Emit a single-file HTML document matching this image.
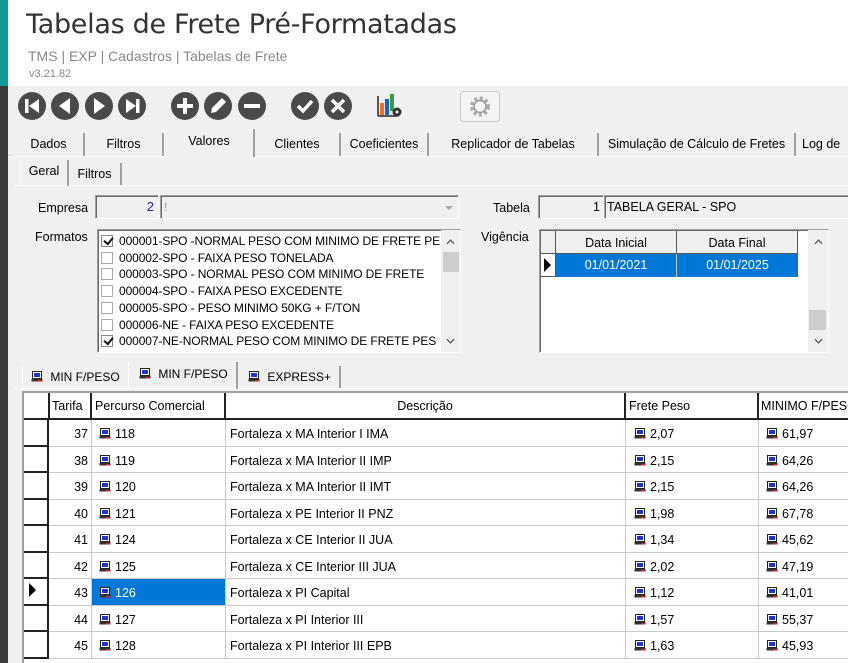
<!DOCTYPE html>
<html><head><meta charset="utf-8">
<style>
*{box-sizing:border-box;margin:0;padding:0}
body{width:863px;height:663px;overflow:hidden;background:#fff;font-family:"Liberation Sans",sans-serif;font-size:12px;color:#000;position:relative}
.a{position:absolute}
.tab{position:absolute;top:133px;height:23px;background:#f0f0f0;border-right:2px solid #a0a0a0;text-align:center;line-height:22px;font-size:12.5px}
.sunk{border:1px solid #a0a0a0;border-right-color:#fff;border-bottom-color:#fff;box-shadow:inset 1px 1px 0 #696969}
.row{position:absolute;left:0;width:824px;border-bottom:1px solid #c8c8c8;background:#fff}
.c{position:absolute;top:0;height:100%;border-right:1px solid #c8c8c8;line-height:28px;font-size:12.5px;white-space:nowrap;overflow:hidden}
.ind{left:0;width:25px;background:#fff;border-right:2px solid #222;border-bottom:2px solid #222;height:calc(100% + 1px)}
.ic{display:inline-block;vertical-align:-1px;margin-right:4px}
.cb{display:inline-block;width:12px;height:12px;border:1px solid #aaa;vertical-align:-2px;margin-right:6px;position:relative}
.cb.k{border-color:#888}
.cb.k::after{content:"";position:absolute;left:2px;top:1px;width:7px;height:4px;border-left:2px solid #111;border-bottom:2px solid #111;transform:rotate(-50deg)}
</style></head><body>
<svg width="0" height="0" style="position:absolute"><defs>
<symbol id="mon" viewBox="0 0 12 11"><rect x="1.5" y="0.5" width="9" height="7" fill="#fff" stroke="#222"/><rect x="3" y="2" width="6" height="4" fill="#2030e0"/><rect x="0.5" y="8" width="11" height="2.5" fill="#333"/><rect x="7" y="9" width="4" height="1.5" fill="#e02020"/></symbol>
<symbol id="up" viewBox="0 0 10 6"><path d="M1 5 L5 1 L9 5" stroke="#555" stroke-width="1.5" fill="none"/></symbol>
<symbol id="dn" viewBox="0 0 10 6"><path d="M1 1 L5 5 L9 1" stroke="#555" stroke-width="1.5" fill="none"/></symbol>
</defs></svg>

<div class="a" style="left:0;top:0;width:8px;height:86px;background:#129a94"></div>
<div class="a" style="left:0;top:86px;width:8px;height:577px;background:#3c3c3c"></div>
<div class="a" style="left:8px;top:86px;width:840px;height:577px;background:#f0f0f0"></div>

<div class="a" style="left:26px;top:9px;font-size:27px;color:#333;font-family:'DejaVu Sans','Liberation Sans',sans-serif;letter-spacing:-0.3px">Tabelas de Frete Pré-Formatadas</div>
<div class="a" style="left:28px;top:48px;font-size:14px;color:#888">TMS | EXP | Cadastros | Tabelas de Frete</div>
<div class="a" style="left:29px;top:68px;font-size:11px;color:#888">v3.21.82</div>

<svg class="a" style="left:0;top:88px" width="520" height="38">
<g fill="#4a4a4a">
<circle cx="32" cy="18" r="14"/><circle cx="65" cy="18" r="14"/><circle cx="99" cy="18" r="14"/><circle cx="132" cy="18" r="14"/>
<circle cx="185" cy="18" r="14"/><circle cx="218" cy="18" r="14"/><circle cx="252" cy="18" r="14"/>
<circle cx="305" cy="18" r="14"/><circle cx="338" cy="18" r="14"/></g>
<g fill="#fff">
<rect x="25" y="11" width="3.5" height="14"/><path d="M39 11 L29 18 L39 25Z"/>
<path d="M70 10 L59 18 L70 26Z"/>
<path d="M94 10 L105 18 L94 26Z"/>
<path d="M126 11 L136 18 L126 25Z"/><rect x="136" y="11" width="3.5" height="14"/>
<rect x="183" y="10" width="4" height="16"/><rect x="177" y="16" width="16" height="4"/>
<path d="M211 25 L212 20 L222 10 L226 14 L216 24Z"/>
<rect x="244" y="16" width="16" height="4"/>
</g>
<path d="M298 18 L303 23 L312 13" stroke="#fff" stroke-width="3.5" fill="none"/>
<path d="M332 12 L344 24 M344 12 L332 24" stroke="#fff" stroke-width="3.5"/>
<line x1="378" y1="8" x2="378" y2="28" stroke="#222" stroke-width="1.5"/><line x1="378" y1="28" x2="398" y2="28" stroke="#222" stroke-width="1.5"/>
<rect x="380" y="15" width="4" height="12" fill="#f07020"/><rect x="385" y="11" width="4" height="16" fill="#2060d0"/><rect x="390" y="6" width="4" height="17" fill="#30a040"/>
<circle cx="397" cy="24" r="4.5" fill="#333"/><circle cx="397" cy="24" r="1.5" fill="#f0f0f0"/>
<rect x="460.5" y="3.5" width="39" height="30" rx="3" fill="#f4f4f4" stroke="#c8c8c8"/>
<circle cx="480" cy="18.5" r="8" fill="none" stroke="#aaa" stroke-width="4" stroke-dasharray="3 2.3"/><circle cx="480" cy="18.5" r="6" fill="none" stroke="#999" stroke-width="1.5"/>
</svg>

<div class="a" style="left:8px;top:155px;width:840px;height:2px;background:#fff;border-top:1px solid #d8d8d8"></div>
<div class="tab" style="left:14px;width:71px">Dados</div>
<div class="tab" style="left:85px;width:79px">Filtros</div>
<div class="tab" style="left:164px;width:91px;top:129px;height:28px;border-left:1px solid #fff;line-height:24px">Valores</div>
<div class="tab" style="left:255px;width:86px">Clientes</div>
<div class="tab" style="left:341px;width:88px">Coeficientes</div>
<div class="tab" style="left:429px;width:170px">Replicador de Tabelas</div>
<div class="tab" style="left:599px;width:197px">Simulação de Cálculo de Fretes</div>
<div class="tab" style="left:796px;width:60px;border:none;text-align:left;padding-left:6px">Log de</div>

<div class="a" style="left:14px;top:185px;width:834px;height:2px;border-top:1px solid #fff"></div>
<div class="a" style="left:20px;top:160px;width:49px;height:26px;border-left:1px solid #fff;border-right:2px solid #a0a0a0;text-align:center;line-height:22px;font-size:12.5px">Geral</div>
<div class="a" style="left:69px;top:163px;width:53px;height:22px;border-right:2px solid #a0a0a0;text-align:center;line-height:22px;font-size:12.5px">Filtros</div>

<div class="a" style="left:38px;top:201px;font-size:12.5px">Empresa</div>
<div class="a sunk" style="left:95px;top:195px;width:64px;height:24px;text-align:right;padding-right:4px;line-height:22px;color:#2020a0;font-size:13px">2</div>
<div class="a sunk" style="left:160px;top:195px;width:299px;height:24px;background:#f0f0f0"><span style="position:absolute;left:3px;top:4px;color:#999">!</span>
<svg class="a" style="right:4px;top:9px" width="10" height="6"><path d="M1 1 L5 5 L9 1Z" fill="#aaa"/></svg></div>
<div class="a" style="left:493px;top:201px;font-size:12.5px">Tabela</div>
<div class="a sunk" style="left:538px;top:195px;width:66px;height:24px;text-align:right;padding-right:3px;line-height:22px;font-size:12.5px">1</div>
<div class="a sunk" style="left:604px;top:195px;width:250px;height:24px;padding-left:2px;line-height:22px;font-size:12.5px">TABELA GERAL - SPO</div>

<div class="a" style="left:35px;top:230px;font-size:12.5px">Formatos</div>
<div class="a sunk" style="left:97px;top:229px;width:364px;height:124px;background:#fff;overflow:hidden">
<div style="position:absolute;left:3px;top:3px;font-size:12px;line-height:16.7px;white-space:nowrap;letter-spacing:-0.1px">
<div><span class="cb k"></span>000001-SPO -NORMAL PESO COM MINIMO DE FRETE PE</div>
<div><span class="cb"></span>000002-SPO - FAIXA PESO TONELADA</div>
<div><span class="cb"></span>000003-SPO - NORMAL PESO COM MINIMO DE FRETE</div>
<div><span class="cb"></span>000004-SPO - FAIXA PESO EXCEDENTE</div>
<div><span class="cb"></span>000005-SPO -  PESO MINIMO 50KG + F/TON</div>
<div><span class="cb"></span>000006-NE - FAIXA PESO EXCEDENTE</div>
<div><span class="cb k"></span>000007-NE-NORMAL PESO COM MINIMO DE FRETE PES</div>
</div>
<div style="position:absolute;right:0;top:0;width:19px;height:122px;background:#f0f0f0">
<svg style="position:absolute;left:5px;top:9px" width="9" height="6"><use href="#up"/></svg>
<div style="position:absolute;left:2px;top:22px;width:16px;height:20px;background:#cdcdcd"></div>
<svg style="position:absolute;left:5px;top:108px" width="9" height="6"><use href="#dn"/></svg></div>
</div>

<div class="a" style="left:481px;top:230px;font-size:12.5px">Vigência</div>
<div class="a sunk" style="left:539px;top:229px;width:290px;height:124px;background:#fff">
<div style="position:absolute;left:1px;top:1px;width:15px;height:23px;background:#f0f0f0;border-right:1px solid #555;border-bottom:1px solid #555"></div>
<div style="position:absolute;left:16px;top:1px;width:121px;height:23px;background:#f0f0f0;border-right:1px solid #555;border-bottom:1px solid #555;text-align:center;line-height:24px;font-size:12.5px">Data Inicial</div>
<div style="position:absolute;left:137px;top:1px;width:121px;height:23px;background:#f0f0f0;border-right:1px solid #555;border-bottom:1px solid #555;text-align:center;line-height:24px;font-size:12.5px">Data Final</div>
<div style="position:absolute;left:1px;top:24px;width:15px;height:23px;background:#fff;border-right:1px solid #555;border-bottom:1px solid #555"><svg width="10" height="14" style="position:absolute;left:3px;top:4px"><path d="M0 0 L7 7 L0 14Z" fill="#000"/></svg></div>
<div style="position:absolute;left:16px;top:24px;width:121px;height:23px;background:#0078d7;color:#fff;border-right:1px solid #c8c8c8;text-align:center;line-height:23px;font-size:12.5px">01/01/2021</div>
<div style="position:absolute;left:137px;top:24px;width:121px;height:23px;background:#0078d7;color:#fff;text-align:center;line-height:23px;font-size:12.5px">01/01/2025</div>
<div style="position:absolute;right:0;top:0;width:20px;height:122px;background:#f0f0f0">
<svg style="position:absolute;left:6px;top:9px" width="9" height="6"><use href="#up"/></svg>
<div style="position:absolute;left:1px;top:80px;width:17px;height:20px;background:#cdcdcd"></div>
<svg style="position:absolute;left:6px;top:108px" width="9" height="6"><use href="#dn"/></svg></div>
</div>

<div class="a" style="left:14px;top:388px;width:834px;height:2px;border-top:1px solid #fff"></div>
<div class="a" style="left:22px;top:366px;width:106px;height:22px;border-left:1px solid #fff;line-height:22px;font-size:12px;padding-left:8px"><svg class="ic" width="12" height="11"><use href="#mon"/></svg> MIN F/PESO</div>
<div class="a" style="left:128px;top:362px;width:110px;height:27px;border-left:1px solid #fff;border-right:2px solid #a0a0a0;line-height:24px;font-size:12px;padding-left:10px"><svg class="ic" width="12" height="11"><use href="#mon"/></svg> MIN F/PESO</div>
<div class="a" style="left:238px;top:366px;width:103px;height:22px;border-right:2px solid #a0a0a0;line-height:22px;font-size:12px;padding-left:10px"><svg class="ic" width="12" height="11"><use href="#mon"/></svg> EXPRESS+</div>

<div class="a" style="left:22px;top:391px;width:826px;height:272px;border-left:2px solid #a0a0a0;border-top:2px solid #a0a0a0;background:#fff;overflow:hidden">
<div style="position:absolute;left:0;top:0;width:824px;height:27px;background:#fff;border-bottom:2px solid #222">
<div class="c" style="left:0;width:26px;border-right:2px solid #222"></div>
<div class="c" style="left:26px;width:42px;border-right:2px solid #222;padding-left:2px;line-height:26px">Tarifa</div>
<div class="c" style="left:68px;width:134px;border-right:2px solid #222;padding-left:3px;line-height:26px">Percurso Comercial</div>
<div class="c" style="left:202px;width:400px;border-right:2px solid #222;text-align:center;line-height:26px">Descrição</div>
<div class="c" style="left:602px;width:133px;border-right:2px solid #222;padding-left:3px;line-height:26px">Frete Peso</div>
<div class="c" style="left:735px;width:100px;padding-left:2px;line-height:26px">MINIMO F/PESO</div>
</div>
</div>
<div class="a" style="left:24px;top:420px;width:824px;height:243px;overflow:hidden">
<div class="row" style="top:0;height:27px"><div class="c ind"></div><div class="c" style="left:25px;width:43px;text-align:right;padding-right:3px">37</div><div class="c" style="left:68px;width:134px;padding-left:7px"><svg class="ic" width="12" height="11"><use href="#mon"/></svg>118</div><div class="c" style="left:202px;width:400px;padding-left:4px">Fortaleza x MA Interior I  IMA</div><div class="c" style="left:602px;width:133px;padding-left:8px"><svg class="ic" width="12" height="11"><use href="#mon"/></svg>2,07</div><div class="c" style="left:735px;width:100px;padding-left:7px;border:none"><svg class="ic" width="12" height="11"><use href="#mon"/></svg>61,97</div></div>
<div class="row" style="top:27px;height:26px"><div class="c ind"></div><div class="c" style="left:25px;width:43px;text-align:right;padding-right:3px">38</div><div class="c" style="left:68px;width:134px;padding-left:7px"><svg class="ic" width="12" height="11"><use href="#mon"/></svg>119</div><div class="c" style="left:202px;width:400px;padding-left:4px">Fortaleza x MA Interior II  IMP</div><div class="c" style="left:602px;width:133px;padding-left:8px"><svg class="ic" width="12" height="11"><use href="#mon"/></svg>2,15</div><div class="c" style="left:735px;width:100px;padding-left:7px;border:none"><svg class="ic" width="12" height="11"><use href="#mon"/></svg>64,26</div></div>
<div class="row" style="top:53px;height:27px"><div class="c ind"></div><div class="c" style="left:25px;width:43px;text-align:right;padding-right:3px">39</div><div class="c" style="left:68px;width:134px;padding-left:7px"><svg class="ic" width="12" height="11"><use href="#mon"/></svg>120</div><div class="c" style="left:202px;width:400px;padding-left:4px">Fortaleza x MA Interior II  IMT</div><div class="c" style="left:602px;width:133px;padding-left:8px"><svg class="ic" width="12" height="11"><use href="#mon"/></svg>2,15</div><div class="c" style="left:735px;width:100px;padding-left:7px;border:none"><svg class="ic" width="12" height="11"><use href="#mon"/></svg>64,26</div></div>
<div class="row" style="top:80px;height:26px"><div class="c ind"></div><div class="c" style="left:25px;width:43px;text-align:right;padding-right:3px">40</div><div class="c" style="left:68px;width:134px;padding-left:7px"><svg class="ic" width="12" height="11"><use href="#mon"/></svg>121</div><div class="c" style="left:202px;width:400px;padding-left:4px">Fortaleza x PE Interior II PNZ</div><div class="c" style="left:602px;width:133px;padding-left:8px"><svg class="ic" width="12" height="11"><use href="#mon"/></svg>1,98</div><div class="c" style="left:735px;width:100px;padding-left:7px;border:none"><svg class="ic" width="12" height="11"><use href="#mon"/></svg>67,78</div></div>
<div class="row" style="top:106px;height:27px"><div class="c ind"></div><div class="c" style="left:25px;width:43px;text-align:right;padding-right:3px">41</div><div class="c" style="left:68px;width:134px;padding-left:7px"><svg class="ic" width="12" height="11"><use href="#mon"/></svg>124</div><div class="c" style="left:202px;width:400px;padding-left:4px">Fortaleza x CE Interior II JUA</div><div class="c" style="left:602px;width:133px;padding-left:8px"><svg class="ic" width="12" height="11"><use href="#mon"/></svg>1,34</div><div class="c" style="left:735px;width:100px;padding-left:7px;border:none"><svg class="ic" width="12" height="11"><use href="#mon"/></svg>45,62</div></div>
<div class="row" style="top:133px;height:26px"><div class="c ind"></div><div class="c" style="left:25px;width:43px;text-align:right;padding-right:3px">42</div><div class="c" style="left:68px;width:134px;padding-left:7px"><svg class="ic" width="12" height="11"><use href="#mon"/></svg>125</div><div class="c" style="left:202px;width:400px;padding-left:4px">Fortaleza x CE Interior III JUA</div><div class="c" style="left:602px;width:133px;padding-left:8px"><svg class="ic" width="12" height="11"><use href="#mon"/></svg>2,02</div><div class="c" style="left:735px;width:100px;padding-left:7px;border:none"><svg class="ic" width="12" height="11"><use href="#mon"/></svg>47,19</div></div>
<div class="row" style="top:159px;height:27px"><div class="c ind"><svg width="9" height="14" style="position:absolute;left:5px;top:4px"><path d="M0 0 L7 7 L0 14Z" fill="#000"/></svg></div><div class="c" style="left:25px;width:43px;text-align:right;padding-right:3px">43</div><div class="c" style="left:68px;width:134px;padding-left:7px;background:#0078d7;color:#fff"><svg class="ic" width="12" height="11"><use href="#mon"/></svg>126</div><div class="c" style="left:202px;width:400px;padding-left:4px">Fortaleza x PI Capital</div><div class="c" style="left:602px;width:133px;padding-left:8px"><svg class="ic" width="12" height="11"><use href="#mon"/></svg>1,12</div><div class="c" style="left:735px;width:100px;padding-left:7px;border:none"><svg class="ic" width="12" height="11"><use href="#mon"/></svg>41,01</div></div>
<div class="row" style="top:186px;height:26px"><div class="c ind"></div><div class="c" style="left:25px;width:43px;text-align:right;padding-right:3px">44</div><div class="c" style="left:68px;width:134px;padding-left:7px"><svg class="ic" width="12" height="11"><use href="#mon"/></svg>127</div><div class="c" style="left:202px;width:400px;padding-left:4px">Fortaleza x PI Interior III</div><div class="c" style="left:602px;width:133px;padding-left:8px"><svg class="ic" width="12" height="11"><use href="#mon"/></svg>1,57</div><div class="c" style="left:735px;width:100px;padding-left:7px;border:none"><svg class="ic" width="12" height="11"><use href="#mon"/></svg>55,37</div></div>
<div class="row" style="top:212px;height:27px"><div class="c ind"></div><div class="c" style="left:25px;width:43px;text-align:right;padding-right:3px">45</div><div class="c" style="left:68px;width:134px;padding-left:7px"><svg class="ic" width="12" height="11"><use href="#mon"/></svg>128</div><div class="c" style="left:202px;width:400px;padding-left:4px">Fortaleza x PI Interior III EPB</div><div class="c" style="left:602px;width:133px;padding-left:8px"><svg class="ic" width="12" height="11"><use href="#mon"/></svg>1,63</div><div class="c" style="left:735px;width:100px;padding-left:7px;border:none"><svg class="ic" width="12" height="11"><use href="#mon"/></svg>45,93</div></div>
</div>
<div class="a" style="left:848px;top:86px;width:15px;height:577px;background:#fff"></div>
</body></html>
